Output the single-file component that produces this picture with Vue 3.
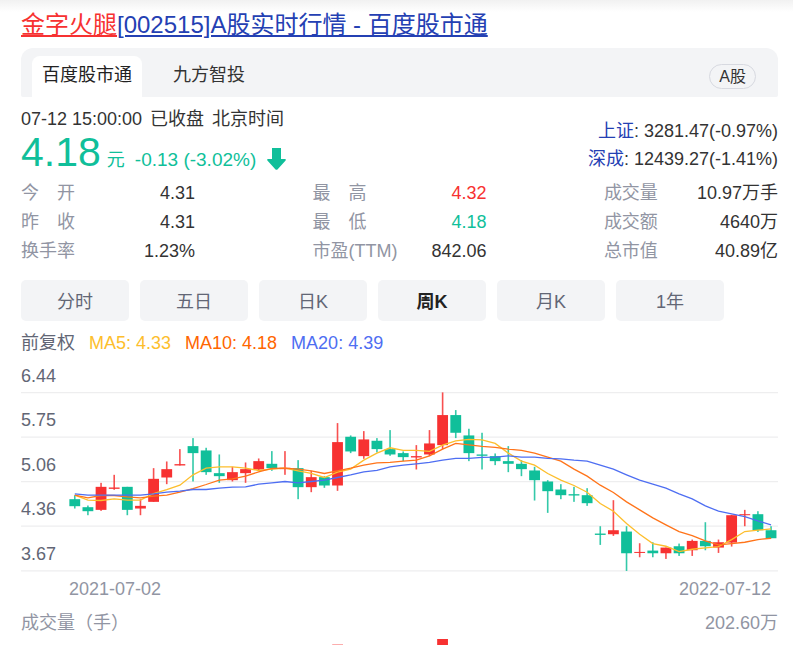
<template>
    <main class="stock-card">
        <h1 class="title">
            <a href="#"><em>金字火腿</em>[002515]A股实时行情 - 百度股市通</a>
        </h1>

        <!-- Data source tabs -->
        <div class="source-bar">
            <button
                v-for="source in sources"
                :key="source"
                type="button"
                class="source-tab"
                :class="{ active: source === activeSource }"
                @click="activeSource = source"
            >{{ source }}</button>
            <span class="market-tag">A股</span>
        </div>

        <!-- Current price and market indexes -->
        <section class="summary">
            <div class="quote">
                <div class="quote-time">
                    <span>07-12 15:00:00</span>
                    <span>已收盘</span>
                    <span>北京时间</span>
                </div>
                <div class="quote-price">
                    <span class="price">4.18</span>
                    <span class="unit">元</span>
                    <span class="change">-0.13 (-3.02%)</span>
                    <svg class="arrow" viewBox="0 0 19 22" aria-hidden="true">
                        <path d="M5 0h9v11h4q1.500 .5 .4 1.700L10.700 21.200q-1.200 1.200-2.400 0L.6 12.700Q-.5 11.500 1 11h4z" />
                    </svg>
                </div>
            </div>
            <div class="indexes">
                <div v-for="item in indexes" :key="item.name">
                    <a href="#">{{ item.name }}</a>: {{ item.value }}
                </div>
            </div>
        </section>

        <section class="stats">
            <dl v-for="(column, i) in stats" :key="i" class="stats-column">
                <div v-for="row in column" :key="row.label" class="stats-row">
                    <dt>{{ row.label }}</dt>
                    <dd :class="row.trend">{{ row.value }}</dd>
                </div>
            </dl>
        </section>

        <!-- Chart period -->
        <div class="periods">
            <button
                v-for="period in periods"
                :key="period"
                type="button"
                class="period"
                :class="{ active: period === activePeriod }"
                @click="activePeriod = period"
            >{{ period }}</button>
        </div>

        <div class="averages">
            <span class="adjust">前复权</span>
            <span class="ma5">MA5: 4.33</span>
            <span class="ma10">MA10: 4.18</span>
            <span class="ma20">MA20: 4.39</span>
        </div>

        <svg class="chart" viewBox="0 0 756 216" role="img" aria-label="周K">
            <g v-for="(label, i) in priceLabels" :key="label">
                <line class="grid-line" x1="0" x2="756" :y1="gridY(i)" :y2="gridY(i)" />
                <text class="axis-label" x="0" :y="gridY(i) - 11">{{ label }}</text>
            </g>
            <g v-for="(candle, i) in candles" :key="i" :class="candle[0] === 'r' ? 'candle-up' : 'candle-down'">
                <rect :x="candleX(i) - 0.8" :y="toY(candle[1])" width="1.6" :height="(candle[4] - candle[1]) / 3" opacity="0.85" />
                <rect :x="candleX(i) - 5.4" :y="toY(candle[2])" width="10.8" :height="(candle[3] - candle[2]) / 3" />
            </g>
            <polyline class="line-ma5" :points="linePoints(ma5)" />
            <polyline class="line-ma10" :points="linePoints(ma10)" />
            <polyline class="line-ma20" :points="linePoints(ma20)" />
        </svg>

        <div class="dates">
            <span>2021-07-02</span>
            <span>2022-07-12</span>
        </div>

        <div class="volume-head">
            <span>成交量（手）</span>
            <span>202.60万</span>
        </div>
        <svg class="volume" viewBox="0 0 756 8" aria-hidden="true">
            <rect class="candle-up" :x="candleX(20) - 5.4" y="7" width="10.8" height="1" opacity="0.4" />
            <rect class="candle-up" :x="candleX(28) - 5.4" y="2" width="10.8" height="6" />
        </svg>
    </main>
</template>

<script setup>
    import { ref } from 'vue';

    const sources = ['百度股市通', '九方智投'];
    const activeSource = ref('百度股市通');

    const periods = ['分时', '五日', '日K', '周K', '月K', '1年'];
    const activePeriod = ref('周K');

    const indexes = [
        { name: '上证', value: '3281.47(-0.97%)' },
        { name: '深成', value: '12439.27(-1.41%)' },
    ];

    const stats = [
        [
            { label: '今　开', value: '4.31' },
            { label: '昨　收', value: '4.31' },
            { label: '换手率', value: '1.23%' },
        ],
        [
            { label: '最　高', value: '4.32', trend: 'up' },
            { label: '最　低', value: '4.18', trend: 'down' },
            { label: '市盈(TTM)', value: '842.06' },
        ],
        [
            { label: '成交量', value: '10.97万手' },
            { label: '成交额', value: '4640万' },
            { label: '总市值', value: '40.89亿' },
        ],
    ];

    const priceLabels = ['6.44', '5.75', '5.06', '4.36', '3.67'];

    // colour, high, body top, body bottom, low (three units to one chart unit)
    const candles = [
        ['g', 345, 357, 378, 385], ['g', 376, 381, 393, 405], ['r', 308, 320, 389, 392],
        ['r', 284, 322, 326, 329], ['g', 320, 320, 389, 405], ['r', 357, 377, 385, 405],
        ['r', 264, 296, 365, 365], ['r', 244, 267, 292, 312], ['r', 207, 252, 256, 256],
        ['g', 174, 198, 219, 304], ['g', 203, 211, 276, 284], ['g', 223, 279, 288, 308],
        ['r', 260, 276, 300, 304], ['r', 247, 267, 279, 308], ['r', 235, 243, 268, 272],
        ['g', 213, 251, 264, 272], ['r', 213, 263, 267, 284], ['g', 240, 264, 321, 357],
        ['r', 272, 291, 321, 336], ['g', 288, 291, 316, 323], ['r', 129, 186, 316, 332],
        ['g', 166, 170, 214, 219], ['r', 153, 178, 228, 236], ['g', 174, 182, 207, 217],
        ['g', 150, 207, 223, 227], ['g', 214, 219, 231, 243], ['r', 195, 228, 232, 268],
        ['r', 150, 190, 223, 228], ['r', 37, 105, 195, 207], ['g', 90, 105, 158, 174],
        ['g', 146, 166, 219, 243], ['g', 158, 223, 227, 268], ['g', 220, 228, 243, 255],
        ['g', 198, 243, 251, 276], ['g', 240, 251, 267, 288], ['g', 260, 271, 300, 361],
        ['g', 300, 304, 333, 398], ['g', 312, 328, 345, 357], ['g', 320, 342, 346, 365],
        ['g', 324, 345, 369, 377], ['g', 438, 460, 464, 494], ['r', 360, 450, 462, 467],
        ['g', 438, 454, 519, 572], ['r', 489, 515, 518, 531], ['g', 486, 511, 519, 531],
        ['r', 502, 502, 519, 536], ['g', 490, 498, 519, 527], ['r', 478, 482, 510, 527],
        ['g', 426, 482, 498, 510], ['r', 478, 486, 502, 518], ['r', 404, 405, 487, 499],
        ['r', 389, 402, 405, 438], ['g', 393, 402, 450, 455], ['g', 438, 450, 474, 474],
    ];

    const ma5 = [
        345, 360, 361, 356, 360, 360, 340, 328, 315, 284, 264, 260, 260, 264, 271, 267, 264, 272,
        280, 292, 276, 267, 240, 219, 203, 211, 211, 214, 195, 182, 178, 179, 190, 219, 243, 255,
        280, 300, 316, 336, 370, 393, 430, 462, 490, 498, 514, 507, 503, 499, 478, 454, 450, 446,
    ];
    const ma10 = [
        345, 353, 346, 346, 350, 353, 348, 345, 336, 325, 313, 300, 296, 288, 275, 265, 264, 267,
        272, 280, 272, 264, 255, 248, 247, 243, 240, 227, 207, 190, 194, 199, 202, 207, 211, 219,
        231, 243, 267, 288, 315, 337, 365, 389, 413, 434, 454, 466, 482, 494, 490, 486, 478, 474,
    ];
    const ma20 = [
        341, 345, 345, 345, 345, 345, 341, 336, 333, 328, 328, 324, 321, 320, 312, 308, 304, 308,
        304, 300, 292, 284, 275, 271, 260, 255, 251, 247, 240, 235, 235, 232, 231, 227, 231, 231,
        235, 236, 240, 243, 255, 267, 284, 300, 312, 324, 341, 356, 377, 393, 401, 409, 422, 434,
    ];

    const candleX = (i) => 53.7 + i * 13.12;
    const toY = (value) => value / 3 + 23;
    const gridY = (i) => 35.5 + i * 44.5;

    // Points of one moving average line
    const linePoints = (values) => values.map((value, i) => `${candleX(i)},${toY(value)}`).join(' ');
</script>

<style>
body {
    margin: 0;
    background: #fff;
}
</style>

<style scoped>
.stock-card {
    padding: 9px 15px 0 21px;
    background: linear-gradient(#f1f1f1, #fff 12px);
    color: #333;
    font-family: "Liberation Sans", "Noto Sans CJK SC", sans-serif;
    font-size: 18px;
    line-height: 28px;
}

button {
    border: none;
    padding: 0;
    font: inherit;
    cursor: pointer;
}

a {
    color: #2440b3;
    text-decoration: none;
}

.title {
    margin: 0 0 7px;
    font-size: 24px;
    font-weight: 400;
    line-height: 32px;
}

.title a {
    text-decoration: underline;
    text-decoration-thickness: 2px;
    text-underline-offset: 2px;
}

.title em {
    color: #f73131;
    font-style: normal;
    text-decoration: underline;
    text-decoration-thickness: 2px;
    text-underline-offset: 2px;
}

.source-bar {
    display: flex;
    align-items: flex-end;
    height: 49px;
    padding: 0 22px 0 11px;
    border-radius: 12px 12px 2px 2px;
    background: #f3f4f6;
}

.source-tab {
    height: 41px;
    padding: 0 10px 4px;
    border-radius: 8px 8px 0 0;
    background: transparent;
    color: #333;
}

.source-tab + .source-tab {
    margin-left: 21px;
}

.source-tab.active {
    background: #fff;
    color: #222;
}

.market-tag {
    margin: 0 0 8px auto;
    padding: 0 9px;
    border: 1px solid #d7d9e0;
    border-radius: 13px;
    font-size: 16px;
    line-height: 23px;
}

.summary {
    display: flex;
    justify-content: space-between;
    padding-top: 8px;
}

.quote-time {
    display: flex;
    gap: 8px;
}

.quote-price {
    display: flex;
    align-items: baseline;
    height: 46px;
    color: #10bf9a;
    line-height: 38px;
}

.price {
    font-size: 41px;
}

.unit {
    margin-left: 6px;
}

.change {
    margin-left: 10px;
    font-size: 19px;
}

.arrow {
    align-self: center;
    width: 19px;
    height: 22px;
    margin: 6px 0 0 11px;
    fill: #10bf9a;
}

.indexes {
    padding-top: 12px;
    text-align: right;
}

.stats {
    display: grid;
    grid-template-columns: repeat(3, 23%);
    justify-content: space-between;
    line-height: 29px;
}

.stats-column {
    margin: 0;
}

.stats-row {
    display: flex;
    justify-content: space-between;
    white-space: nowrap;
}

.stats-row dt {
    color: #9195a3;
}

.stats-row dd {
    margin: 0;
}

.stats-row .up {
    color: #f73131;
}

.stats-row .down {
    color: #10bf9a;
}

.periods {
    display: grid;
    grid-template-columns: repeat(6, 1fr);
    gap: 11px;
    margin-top: 14px;
    padding-right: 54px;
}

.period {
    height: 41px;
    padding-top: 2px;
    border-radius: 5px;
    background: #f3f4f6;
    color: #626675;
}

.period.active {
    color: #222;
    font-weight: 700;
}

.averages {
    display: flex;
    gap: 14px;
    margin-top: 8px;
}

.adjust {
    color: #626675;
}

.ma5 {
    color: #fdbe2c;
}

.ma10 {
    color: #ff6600;
}

.ma20 {
    color: #4e6ef2;
}

.chart,
.volume {
    display: block;
    width: 100%;
}

.grid-line {
    stroke: #eeeeef;
    stroke-width: 1.3;
}

.axis-label {
    fill: #626675;
    font-size: 18px;
}

.candle-up {
    fill: #f73131;
}

.candle-down {
    fill: #10bf9a;
}

polyline {
    fill: none;
    stroke-width: 1.3;
}

.line-ma5 {
    stroke: #fdbe2c;
}

.line-ma10 {
    stroke: #ff741a;
}

.line-ma20 {
    stroke: #4e6ef2;
}

.dates,
.volume-head {
    display: flex;
    justify-content: space-between;
    color: #9195a3;
}

.dates {
    padding: 2px 7px 0 48px;
}

.volume-head {
    margin-top: 6px;
}
</style>
